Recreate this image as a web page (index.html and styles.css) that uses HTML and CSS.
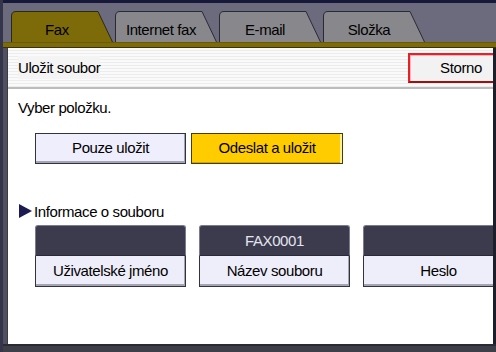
FILE: index.html
```html
<!DOCTYPE html>
<html lang="cs">
<head>
    <meta charset="UTF-8">
    <meta name="viewport" content="width=device-width, initial-scale=1.0">
    <title>Uložit soubor</title>
    <link rel="stylesheet" href="styles.css">
</head>
<body>
    <div class="screen">
        <div class="top-strip"></div>

        <div class="tab-bar">
            <div class="tab active">
                <svg class="tab-shape" viewBox="0 0 102 31" preserveAspectRatio="none">
                    <path d="M0.5 31 V5 Q0.5 0.5 5 0.5 H87 L101.5 31" />
                </svg>
                <span class="tab-label">Fax</span>
            </div>
            <div class="tab">
                <svg class="tab-shape" viewBox="0 0 102 31" preserveAspectRatio="none">
                    <path d="M0.5 31 V5 Q0.5 0.5 5 0.5 H87 L101.5 31" />
                </svg>
                <span class="tab-label">Internet fax</span>
            </div>
            <div class="tab">
                <svg class="tab-shape" viewBox="0 0 102 31" preserveAspectRatio="none">
                    <path d="M0.5 31 V5 Q0.5 0.5 5 0.5 H87 L101.5 31" />
                </svg>
                <span class="tab-label">E-mail</span>
            </div>
            <div class="tab">
                <svg class="tab-shape" viewBox="0 0 102 31" preserveAspectRatio="none">
                    <path d="M0.5 31 V5 Q0.5 0.5 5 0.5 H87 L101.5 31" />
                </svg>
                <span class="tab-label">Složka</span>
            </div>
        </div>
        <div class="tab-line"></div>

        <div class="frame">
            <div class="frame-left"></div>
            <div class="panel">
                <div class="panel-header">
                    <span class="header-title">Uložit soubor</span>
                    <button class="btn-cancel">Storno</button>
                </div>

                <p class="prompt">Vyber položku.</p>

                <div class="choice-row">
                    <button class="btn-choice">Pouze uložit</button>
                    <button class="btn-choice selected">Odeslat a uložit</button>
                </div>

                <div class="section-title">
                    <svg class="arrow" width="13" height="14" viewBox="0 0 13 14">
                        <path d="M0 0 L13 7 L0 14 Z" />
                    </svg>
                    <span>Informace o souboru</span>
                </div>

                <div class="field-row">
                    <div class="field">
                        <div class="field-value"></div>
                        <button class="field-btn">Uživatelské jméno</button>
                    </div>
                    <div class="field">
                        <div class="field-value">FAX0001</div>
                        <button class="field-btn">Název souboru</button>
                    </div>
                    <div class="field">
                        <div class="field-value"></div>
                        <button class="field-btn">Heslo</button>
                    </div>
                </div>
            </div>
            <div class="frame-right"></div>
        </div>

        <div class="bottom-strip"></div>
    </div>
</body>
</html>
```

FILE: styles.css
```css
/* Ovládací panel - uložit soubor */
* {
    box-sizing: border-box;
}

body {
    margin: 0;
    padding: 0;
    font-family: "Liberation Sans", Arial, sans-serif;
    font-size: 15px;
    letter-spacing: -0.4px;
    color: #000;
    background: #6b6b7d;
}

.screen {
    width: 496px;
    height: 352px;
    display: flex;
    flex-direction: column;
    overflow: hidden;
    border-left: 3px solid #34344a;
}

.top-strip {
    height: 3px;
    background: #17193a;
}

/* Záložky */
.tab-bar {
    height: 39px;
    display: flex;
    align-items: flex-end;
    gap: 2px;
    padding-left: 8px;
}

.tab {
    position: relative;
    width: 102px;
    height: 31px;
    display: flex;
    align-items: center;
    justify-content: center;
    padding-right: 10px;
}

.tab-shape {
    position: absolute;
    inset: 0;
    width: 102px;
    height: 31px;
}

.tab-shape path {
    fill: #88888c;
    stroke: #2a2a34;
    stroke-width: 1;
}

.tab.active .tab-shape path {
    fill: #7d6a08;
    stroke: #2a2a1a;
}

.tab-label {
    position: relative;
    margin-top: 6px;
    font-size: 15px;
}

.tab-line {
    height: 6px;
    background: #7d6a08;
    border-top: 1px solid #6a5a06;
    border-bottom: 1px solid #3a3208;
}

/* Rám */
.frame {
    flex: 1;
    display: flex;
}

.frame-left {
    width: 5px;
    background: #505060;
    border-right: 1px solid #3a3a48;
}

.frame-right {
    width: 3px;
    background: #1e1e2a;
}

.panel {
    flex: 1;
    background: #fff;
    overflow: hidden;
    display: flex;
    flex-direction: column;
}

.panel-header {
    height: 41px;
    display: flex;
    align-items: center;
    justify-content: space-between;
    padding-left: 10px;
    background:
        repeating-linear-gradient(to bottom, #fafafa 0, #fafafa 2px, #ececec 2px, #ececec 3px);
    border-bottom: 2px solid #bcbcbc;
    position: relative;
}

.header-title {
    background: #f4f4f4;
    padding: 3px 0;
}

.btn-cancel {
    width: 106px;
    height: 30px;
    margin-right: -21px;
    background: #f2f2f2;
    border: 2px solid #e62222;
    border-bottom-color: #a01010;
    box-shadow: inset 1px 1px 0 #f7b0c8;
    font-family: inherit;
    font-size: 15px;
    letter-spacing: -0.4px;
    padding: 0;
}

.prompt {
    margin: 10px 0 0 10px;
    line-height: 18px;
}

/* Volba */
.choice-row {
    display: flex;
    gap: 5px;
    margin: 16px 0 0 27px;
}

.btn-choice {
    width: 151px;
    height: 31px;
    background: #eeeefc;
    border: 1px solid #33333f;
    box-shadow: inset -1px -2px 0 #a4a4b4;
    font-family: inherit;
    font-size: 15px;
    letter-spacing: -0.4px;
    padding: 0 0 2px;
}

.btn-choice.selected {
    width: 152px;
    background: #ffcc00;
    border-color: #4a3c00;
    box-shadow: inset -2px 0 0 #fff0a0, inset 0 -1px 0 #d0a400;
}

.section-title {
    display: flex;
    align-items: center;
    margin: 39px 0 0 11px;
    height: 16px;
}

.arrow path {
    fill: #1c1c52;
}

.section-title span {
    margin-left: 2px;
}

/* Pole */
.field-row {
    display: flex;
    gap: 13px;
    margin: 6px 0 0 27px;
}

.field {
    flex: 0 0 151px;
    display: flex;
    flex-direction: column;
}

.field-value {
    height: 31px;
    background: #3b3b4d;
    border: 1px solid #7a7a90;
    border-bottom: 1px solid #2a2a36;
    border-radius: 3px 3px 0 0;
    color: #e4e4ee;
    display: flex;
    align-items: center;
    justify-content: center;
}

.field-btn {
    height: 31px;
    background: #eeeefa;
    border: 1px solid #33333f;
    border-top: none;
    box-shadow: inset -1px -2px 0 #a4a4b4;
    font-family: inherit;
    font-size: 15px;
    letter-spacing: -0.4px;
    padding: 0 0 2px;
}

.bottom-strip {
    height: 8px;
    background: #3e3e48;
    border-top: 2px solid #2a2a34;
}
```
